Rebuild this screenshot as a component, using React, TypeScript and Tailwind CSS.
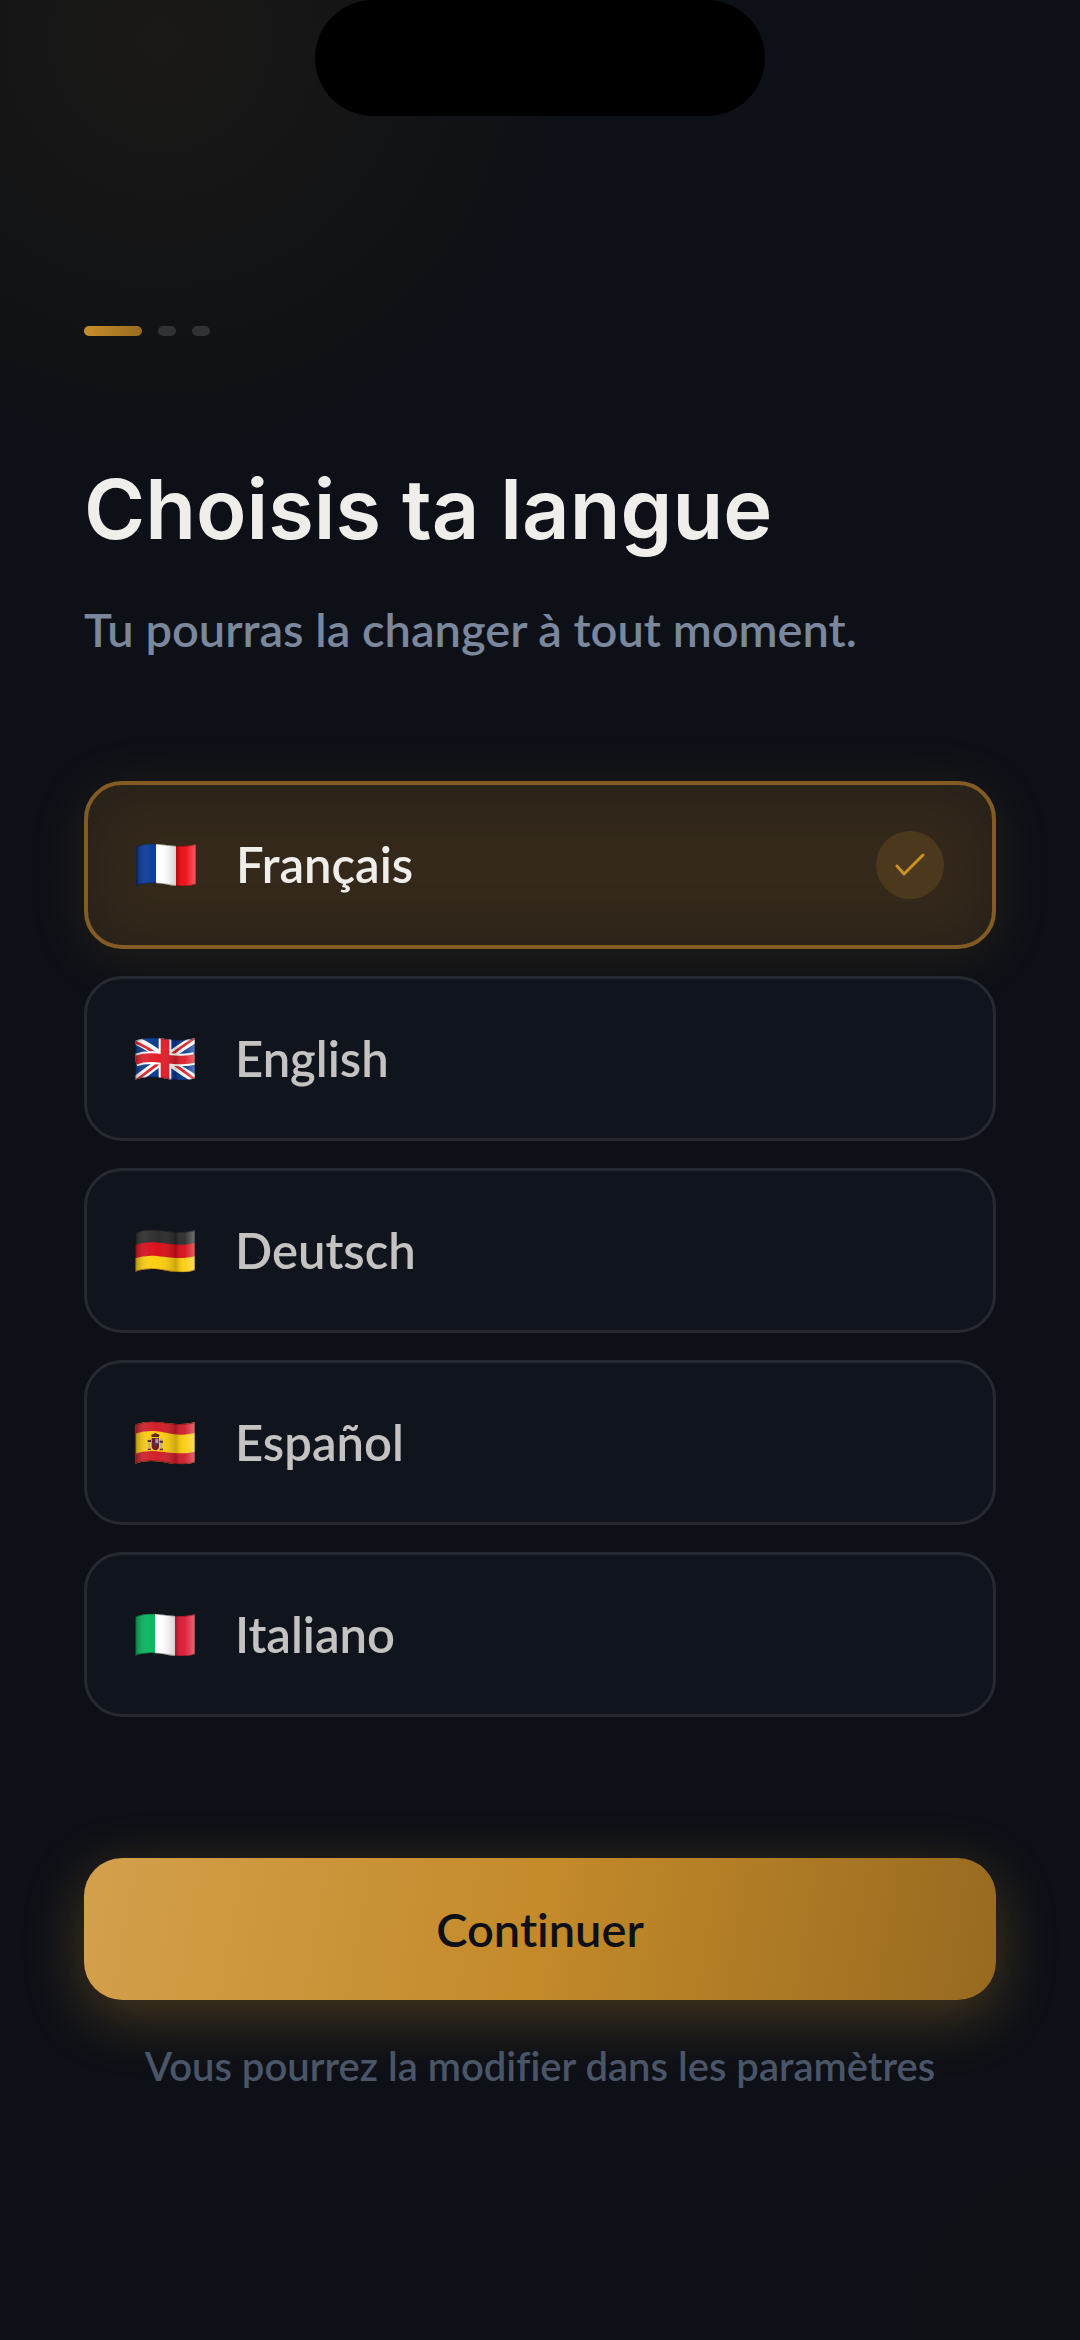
import { useState, type ReactNode } from "react";

const WAVE =
  "M1 10Q24 0 55 1C90 3 110 9 140 8Q165 7 180 3V122Q165 129 135 129C100 128 85 119 50 119Q20 119 1 127Z";

function Flag({ id, children }: { id: string; children: ReactNode }) {
  return (
    <svg viewBox="0 0 180 130" className="h-[44px] w-[60px] shrink-0" aria-hidden="true">
      <defs>
        <clipPath id={`clip-${id}`}>
          <path d={WAVE} />
        </clipPath>
        <linearGradient id={`shade-${id}`} x1="0" y1="0" x2="1" y2="0">
          <stop offset="0" stopColor="#000" stopOpacity="0.3" />
          <stop offset="0.22" stopColor="#fff" stopOpacity="0.06" />
          <stop offset="0.4" stopColor="#fff" stopOpacity="0.02" />
          <stop offset="0.68" stopColor="#000" stopOpacity="0.2" />
          <stop offset="0.82" stopColor="#fff" stopOpacity="0.04" />
          <stop offset="1" stopColor="#fff" stopOpacity="0.34" />
        </linearGradient>
      </defs>
      <g clipPath={`url(#clip-${id})`}>
        {children}
        <rect width="180" height="130" fill={`url(#shade-${id})`} />
        <path d={WAVE} fill="none" stroke="#000" strokeOpacity="0.35" strokeWidth="5" />
      </g>
    </svg>
  );
}

// middle and lower bands of a horizontal tricolour follow the wave
function bandPath(y: number) {
  return `M0 ${y + 9}Q24 ${y} 55 ${y + 1}C90 ${y + 3} 110 ${y + 9} 140 ${y + 8}Q165 ${y + 7} 180 ${y + 3}V130H0Z`;
}

const languages = [
  {
    code: "fr",
    label: "Français",
    flag: (
      <>
        <rect width="60" height="130" fill="#04369a" />
        <rect x="60" width="60" height="130" fill="#fff" />
        <rect x="120" width="60" height="130" fill="#f00a12" />
      </>
    ),
  },
  {
    code: "en",
    label: "English",
    flag: (
      <>
        <rect width="180" height="130" fill="#04388e" />
        <path d="M0 8Q44 28 90 64T180 124M0 130Q44 96 90 64T180 4" fill="none" stroke="#fff" strokeWidth="24" />
        <path
          d="M0 14Q36 28 74 58M106 72Q140 98 180 126M0 132Q36 104 74 76M106 54Q140 28 180 2"
          fill="none"
          stroke="#e01c28"
          strokeWidth="8"
        />
        <path d="M0 69Q24 60 55 61C90 63 110 69 140 68Q165 67 180 63M90 0V130" fill="none" stroke="#fff" strokeWidth="38" />
        <path d="M0 69Q24 60 55 61C90 63 110 69 140 68Q165 67 180 63M90 0V130" fill="none" stroke="#e01c28" strokeWidth="26" />
      </>
    ),
  },
  {
    code: "de",
    label: "Deutsch",
    flag: (
      <>
        <rect width="180" height="130" fill="#2a2a2a" />
        <path d={bandPath(38)} fill="#d80c18" />
        <path d={bandPath(78)} fill="#fccc0c" />
      </>
    ),
  },
  {
    code: "es",
    label: "Español",
    flag: (
      <>
        <rect width="180" height="130" fill="#fccc0c" />
        <path d="M0 0H180V35Q165 39 140 40C110 41 90 31 55 29Q24 28 0 37Z" fill="#d01c28" />
        <path d={bandPath(88)} fill="#d01c28" />
        <path d="M40 52H46V84H40ZM76 52H82V86H76Z" fill="#b8a890" />
        <path d="M38 56H48V62H38ZM74 58H84V64H74ZM38 82H48V86H38ZM74 82H84V87H74Z" fill="#4a2038" />
        <path d="M50 50H72V76Q70 86 61 87Q52 86 50 76Z" fill="#6c1428" />
        <path d="M61 52H70V66H61Z" fill="#a898a8" />
        <path d="M50 47Q46 38 56 38L61 34L66 38Q76 38 72 47Z" fill="#5c2410" />
        <circle cx="61" cy="68" r="4" fill="#283c8c" />
      </>
    ),
  },
  {
    code: "it",
    label: "Italiano",
    flag: (
      <>
        <rect width="60" height="130" fill="#04b45a" />
        <rect x="60" width="60" height="130" fill="#fff" />
        <rect x="120" width="60" height="130" fill="#dc1832" />
      </>
    ),
  },
];

const steps = ["language", "profile", "done"];

export default function App() {
  const [selected, setSelected] = useState("fr");
  const step = 0;

  return (
    <div className="min-h-screen bg-[#0d1017] bg-[radial-gradient(circle_at_160px_40px,#1a1917_0,#121315_270px,transparent_440px),radial-gradient(circle_at_100%_100%,#0f1116_0,transparent_360px)] font-['Lato',sans-serif] text-[#f0eeea] [font-variant-ligatures:none]">
      <div className="mx-auto h-[116px] w-[450px] rounded-full bg-black" />

      <main className="px-[84px] pt-[210px]">
        <div className="flex gap-4">
          {steps.map((name, i) => (
            <span
              key={name}
              className={`h-[10px] rounded-full ${
                i === step ? "w-[58px] bg-linear-to-r from-[#c98e2b] to-[#986b20]" : "w-[18px] bg-[#313236]"
              }`}
            />
          ))}
        </div>

        <h1 className="mt-[123px] font-['Inter',sans-serif] text-[83px] leading-[100px] font-semibold">
          Choisis ta langue
        </h1>
        <p className="mt-[38px] text-[47px] leading-[64px] font-semibold text-[#7a879c]">
          Tu pourras la changer à tout moment.
        </p>

        <div className="mt-[120px] flex flex-col gap-[27px]">
          {languages.map((lang) => {
            const active = lang.code === selected;
            return (
              <button
                key={lang.code}
                type="button"
                aria-pressed={active}
                onClick={() => setSelected(lang.code)}
                className={`flex items-center rounded-[38px] px-12 text-left text-[49px] font-semibold ${
                  active
                    ? "h-[168px] border-4 border-[#835c23] bg-[#34291b] text-[#f0eeea] shadow-[0_8px_60px_rgba(201,142,43,0.12),inset_0_4px_60px_rgba(13,17,23,0.4)]"
                    : "h-[165px] border-3 border-[#262a30] bg-[#10141c] text-[#c4c3c2]"
                }`}
              >
                <Flag id={lang.code}>{lang.flag}</Flag>
                <span className="ml-10 flex-1">{lang.label}</span>
                {active && (
                  <span className="flex size-[68px] items-center justify-center rounded-full bg-[#4c391d]">
                    <svg viewBox="0 0 34 26" className="h-[26px] w-[34px]" fill="none" aria-hidden="true">
                      <path
                        d="M4 14L11 22L30 3"
                        stroke="#cb8f2b"
                        strokeWidth="3"
                        strokeLinecap="round"
                        strokeLinejoin="round"
                      />
                    </svg>
                  </span>
                )}
              </button>
            );
          })}
        </div>

        <button
          type="button"
          className="mt-[141px] h-[142px] w-full rounded-[38px] bg-[linear-gradient(100deg,#d4a04c_0%,#c48a2a_50%,#976a20_100%)] text-[47px] font-semibold text-[#0d1117] shadow-[0_16px_60px_rgba(201,142,43,0.32)]"
        >
          Continuer
        </button>
        <p className="mt-[38px] pb-16 text-center text-[40px] leading-[56px] font-semibold text-[#4a5568]">
          Vous pourrez la modifier dans les paramètres
        </p>
      </main>
    </div>
  );
}
